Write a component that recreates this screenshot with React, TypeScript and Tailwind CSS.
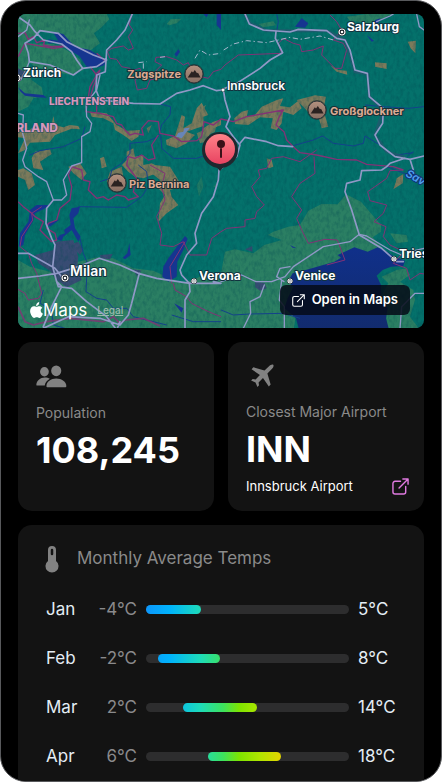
import React from "react";

type Month = { name: string; low: number; high: number };

const months: Month[] = [
  { name: "Jan", low: -4, high: 5 },
  { name: "Feb", low: -2, high: 8 },
  { name: "Mar", low: 2, high: 14 },
  { name: "Apr", low: 6, high: 18 },
];

const YEAR_MIN = -4;
const YEAR_MAX = 29;

function ExternalIcon({ className }: { className: string }) {
  return (
    <svg viewBox="0 0 18 18" fill="none" stroke="currentColor" strokeLinecap="round" strokeLinejoin="round" className={className} aria-hidden="true">
      <path d="M9 3.5H3.2A2.2 2.2 0 0 0 1 5.700V14.800A2.200 2.200 0 0 0 3.200 17H12.300A2.200 2.200 0 0 0 14.500 14.800V9" />
      <path d="M7.500 10.500L17 1M11.500 1H17V6.500" />
    </svg>
  );
}

function Peak({ x, y }: { x: number; y: number }) {
  return (
    <g transform={`translate(${x} ${y})`}>
      <circle r="10" fill="#12282d" opacity=".55" />
      <circle r="9" fill="url(#peak)" stroke="#31373a" strokeWidth="1" />
      <path d="M-6.300 3.500L-2.200 -2.800L-1 -1.500L.8 -4L3 -.8L4 -1.300L6.500 3.500Z" fill="#2a2221" />
    </g>
  );
}

function City({ x, y, r = 3 }: { x: number; y: number; r?: number }) {
  return (
    <g transform={`translate(${x} ${y})`}>
      <circle r={r + 1} fill="#101820" />
      <circle r={r} fill="#101820" stroke="#fff" strokeWidth="1.200" />
      <circle r={r > 2 ? 1.3 : 1} fill="#fff" />
    </g>
  );
}

function Terrain() {
  return (
    <g transform="scale(.33333)">
      <rect x="0" y="0" width="1326" height="1000" fill="#04716b" />

      {/* lowlands */}
      <g fill="#2b7f63">
        <path d="M54 42H320L328 58L305 82L282 100L300 130L262 158L240 150L200 125L165 95L120 95L80 130L54 140Z" />
        <path d="M54 120L80 130L160 132L200 150L240 178L250 210L215 225L160 215L105 200L85 185L95 240L125 262L130 290L100 295L85 320L54 335Z" />
        <path d="M500 72L512 58L545 56L530 70L508 76ZM775 72L820 64L828 76L790 82ZM1040 50L1100 42H1180L1150 55L1110 70L1050 62Z" />
        <path d="M54 780L90 800L150 815L235 785L290 772L340 775L400 805L460 812L510 835L550 850L600 830L663 820L675 755L705 748L760 760L793 735L845 720L803 705L820 695L865 680L900 675L925 632L965 612L1013 613L1038 583L1083 605L1143 675L1143 695L1118 712L1143 738L1130 758L1100 830L900 850L880 1000H54Z" />
        <path d="M1170 700L1220 705L1224 725L1190 730ZM1145 830L1190 810L1220 805L1230 825L1200 845L1240 870L1245 900L1230 950L1260 990H1160L1158 930L1143 890L1165 850Z" />
        <path d="M590 555L605 530L610 560L597 590ZM640 560L650 550V562Z" opacity=".7" />
      </g>

      {/* urban areas */}
      <g fill="#384c73">
        <path d="M105 765L160 750L165 725L220 720L235 770L232 800L245 840L200 862L170 840L150 812L115 790Z" />
        <path d="M175 730L205 735L235 725L250 750L240 765L215 740L180 742ZM300 765L338 762L330 778L302 775ZM765 845L793 848L800 865L780 872L766 862ZM735 748L757 738V755ZM400 808L425 812L410 828Z" />
        <path d="M54 205L75 215L66 240H54Z" />
      </g>

      {/* bare rock */}
      <g fill="#7c7a5b">
        <path d="M54 395L80 395L95 385L120 388L155 372L160 348L165 375L190 382L210 375L235 378L240 388L215 386L165 405L150 425L90 428L75 450L54 460L75 415L54 412Z" />
        <path d="M105 455L150 448L155 462L120 485L130 510L100 505L95 475ZM270 335L320 340L350 375L380 392L420 390L415 410L395 423L370 405L345 390L340 370L310 355L275 350ZM590 325L605 308L625 345L610 350L612 378L590 385L560 395L585 405L560 430L530 445L500 435L498 420L525 408L545 345L555 350L550 385L575 370Z" />
        <path d="M380 455L400 445L405 470L430 465L430 495L455 490L475 500L470 520L430 535L405 530L385 515L366 495L380 480ZM300 475L312 470L320 500L305 505ZM610 385L640 365L663 358L663 375L640 385L625 410L607 405Z" />
        <path d="M703 355L725 335L745 330L740 350L765 345L785 320L830 300L850 295L840 318L870 322L895 302L905 325L880 345L850 335L845 370L830 390L812 385L818 355L780 352L745 375L705 372ZM890 300L945 286L978 290L970 330L985 380L965 385L955 350L930 342ZM990 195L1015 210L1040 212L1042 224L1010 215ZM1125 187L1160 190L1160 207L1125 200ZM1223 125L1248 122L1246 160L1232 145Z" />
        <path d="M205 500L240 490L260 520L245 540L220 520ZM70 505L95 520L105 555L85 570L75 540L54 530V510ZM330 515L365 500L370 530L345 560L320 545ZM465 495L510 500L535 540L540 560L510 570L515 590L535 615L500 640L475 665L480 610L495 585L470 560L480 540L455 520ZM1190 535L1210 522L1208 550L1180 568L1188 545ZM800 475L815 480L820 500L805 505ZM805 495H820L812 505Z" />
        <path d="M590 400L650 370L645 395L625 405L620 425L600 430ZM440 385L455 375L445 400ZM600 325L618 315L600 350Z" opacity=".8" />
      </g>

      <rect x="0" y="0" width="1326" height="1000" filter="url(#relief)" opacity=".45" />

      {/* lakes and sea */}
      <g fill="#163590">
        <path d="M158 95L190 102L225 140L270 150L318 180L312 196L295 202L260 200L238 168L200 145L182 128L145 130V118L175 122Z" />
        <path d="M610 42H625L620 52ZM650 42H663V90L650 75ZM885 80L905 55L925 70L915 83ZM535 148L540 155L530 170L523 163ZM1100 105L1122 122L1115 125ZM1125 60L1142 55L1132 75L1128 95L1120 90Z" />
        <path d="M54 262L75 280L130 285L140 293L110 292L75 287L62 275Z" />
        <path d="M90 630L110 615L150 615L130 628L105 640L98 665L75 705L70 735L56 740L60 700L85 665ZM140 670L180 658L150 680ZM215 625L240 620L235 640L220 655L225 685L242 710L235 725L215 690L190 710L185 722L170 718L180 705L195 700L192 690L212 675L208 645Z" />
        <path d="M555 708L563 716L550 750L532 785L530 830L505 845L487 830L490 800L505 775ZM388 730L392 765L375 778L368 773L382 760ZM522 910L550 925L545 938ZM870 735L890 745L878 743Z" />
      </g>
      <path d="M863 845L878 820L928 807L1003 785L1023 773L1013 765L1063 742L1103 755L1133 742L1163 757L1183 770L1215 782L1210 798L1173 800L1148 810L1130 827L1143 855L1143 895L1163 925L1158 955L1170 1000H900L888 955L853 925L863 895L880 860Z" fill="url(#sea)" />
      <path d="M528 410L535 398L550 395L553 385L570 383L560 395L545 415L535 412Z" fill="#6785b8" />

      {/* rivers */}
      <g fill="none" stroke="#14418b" strokeWidth="3" strokeLinejoin="round">
        <path d="M88 466L120 452L190 440L245 415L255 380" />
        <path d="M480 312L512 320L510 345L485 375L475 410L440 425L390 430V460L365 490L335 510L330 535L300 545M482 405L485 445L520 475L590 475L620 465L660 455L690 480" />
        <path d="M235 620L380 622L425 590L445 560L440 515L415 495M240 715L250 760L262 790L258 875L290 895L320 900L340 925H380L400 950L440 960L500 975" />
        <path d="M880 437L940 420L968 408L1000 430L1060 438L1090 430L1095 408L1140 435M1095 315L1150 320L1225 325L1272 320M830 42L835 65L830 95M663 930L700 945L750 942L850 940L900 955M515 945L580 965H663M130 870L120 910L155 930L160 975L195 985" />
        <path d="M1160 500L1240 530L1272 550M1190 465L1240 458M1220 470L1240 455" />
      </g>

      {/* borders */}
      <g fill="none" stroke="#833276" strokeWidth="3" strokeLinejoin="round">
        <path d="M395 42L388 75L398 90L385 110L400 145L385 150L370 138L335 145L322 155L330 175L350 178L365 200L390 205L392 213L420 205L425 225L405 240L412 270L440 265L450 240L470 235L465 215L485 195L465 185L468 172L500 170L530 180L550 195L565 188L580 225L625 235L640 215L663 208L675 195L715 165L845 160L835 130L850 115L880 130L900 135L905 155L940 150L970 138L965 165L1005 205L1025 205L1040 150L1030 130L1000 120L1025 90L1010 65L990 45" />
        <path d="M54 100L75 98L85 118L100 110L110 128L135 120L130 135L155 140L190 138M75 130L160 145L195 140M54 170L75 130M290 160L318 185M270 200L290 225L270 260L262 310L258 335L300 340L340 350L350 370L365 375L375 390L390 405L405 400L430 405L425 385L445 362L475 365L480 400L520 408L545 425L590 422L605 410L612 365L640 375L663 357L700 365L740 350L850 330L838 350L828 375L852 395L860 420L880 440L900 458L950 465L1010 478L1070 480L1100 493L1180 500L1210 510M285 225L300 210L280 260L270 295L290 300V335" strokeWidth="4" />
        <path d="M475 405L455 435L465 475L445 480L425 465L405 475L385 470L380 495L410 535L405 555L400 575L415 590L385 600L375 590L350 585L325 600L310 590L290 595L265 570L270 545L250 540L245 510L215 500L205 525L215 560L210 600L180 625L170 660L145 670L140 685L165 700L170 720L155 725L140 710L120 690L130 665L105 650L95 640L70 620L54 605" strokeWidth="4" />
        <path d="M125 620L95 640L98 660L65 710L60 740L85 760L95 790L110 820L125 880L115 895L85 900L75 880L54 868" />
        <path d="M450 495L495 520L485 560L495 600L470 650L485 700L480 735L520 740L550 725L560 745L570 765L620 765L635 715L663 695L680 685L735 680L735 660L765 655L770 635L793 615L770 590L755 560L780 530L775 510L800 505L815 475L850 470L900 485L950 450" />
        <path d="M942 470L945 520L900 550L875 590L905 630L890 655L905 690L925 730L975 718L1012 720L1035 780L980 795M1210 510L1170 512L1160 535L1125 560L1103 575L1110 602L1160 615L1150 640L1122 665L1158 680L1150 710L1170 735L1212 755L1180 790L1220 805L1230 840L1260 820L1272 822M520 850L525 870L560 890L575 910L625 935L663 950M555 725L510 800L515 850" />
        <path d="M54 920L75 965L100 975L140 965L210 955L310 965L340 950L360 970L375 960L430 955L480 978" strokeWidth="5" opacity=".8" />
      </g>

      {/* motorways */}
      <g fill="none" stroke="#27556f" strokeWidth="9" opacity=".7">
        <path d="M735 42L750 70L800 92L980 92L1035 120L1065 215L1103 222L1108 290L1150 330L1125 405L1160 455L1215 472" />
      </g>
      <g fill="none" stroke="#9098c6" strokeWidth="5" strokeLinejoin="round" strokeLinecap="round">
        <path d="M397 42L375 90L350 120L320 150L316 215L290 225L288 270L300 300L400 310L480 312L530 280L570 270L610 257L650 272L663 270L710 250L780 205L810 180L848 158L826 115L828 95M54 50L90 75L105 95L130 120L185 132L215 155L230 180L248 205L290 200L320 180L280 165L230 140L200 125L175 100L120 92L100 115L75 130L85 160L88 185L150 195L220 225L248 205" />
        <path d="M54 110L80 90L88 60M88 185L75 215L62 240L54 245M54 340L70 345L68 400L80 445L68 480L75 500L115 530L140 545L160 600L185 600L200 585L190 540L215 498L245 488V410L270 395L275 370L260 350L258 310L290 270L300 225" strokeWidth="4" />
        <path d="M160 600L140 625L138 670L155 715L165 735L158 800L170 845L185 860L155 920L130 980M54 760H85L165 805L185 830M54 835L120 828L170 820L235 800L298 775L360 795L415 820L470 835L570 850L663 850L640 845M170 845L175 860L215 865L260 905L320 950L350 990M130 985L205 950L300 955L360 975L385 945L395 910L418 820M350 990L360 965" />
        <path d="M671 275L675 300L690 350L678 380L700 410L720 435L710 470L690 485L657 510L655 540L640 590L605 640L585 700L590 730L560 765L540 810L545 825L568 850L570 875L555 900V985" />
        <path d="M735 42L748 72L790 90L870 96L895 88L980 92L1010 115L1035 120L1050 150L1065 210L1102 220L1108 290L1150 325L1148 370L1125 405L1140 435L1185 470L1230 478L1272 468M720 430L735 412L800 425L835 437L878 440M1230 478L1240 510M1160 500L1145 510L1085 512L1080 540L1040 550L1035 575L1055 630L1078 705L1145 745L1190 785L1210 785M1160 500L1170 490L1215 475" />
        <path d="M663 845L725 825L768 845L815 845L855 830L880 800L970 740L1050 725L1078 703L1100 708L1170 750L1205 765M793 855L780 890L750 905L752 940L730 985M852 845L830 830L840 805L870 800M845 840L838 900L853 920V985M1272 745L1230 755M1272 880L1245 880L1205 920L1200 985M1130 65L1170 48L1180 42M1250 42L1258 80L1272 90" strokeWidth="4" />
      </g>
      <path d="M585 175L600 150L625 165L663 160M671 150L700 132L740 122L770 125L800 128L870 112L900 118L960 108L1000 120M415 188L440 185M430 190V210L415 225M480 172L495 170" fill="none" stroke="#a7b7ce" strokeWidth="3" strokeDasharray="16 8 4 8" />
    </g>
  );
}

function RegionMap() {
  return (
    <svg viewBox="18 14 406 314" preserveAspectRatio="xMidYMid slice" className="block h-full w-full font-['Inter',sans-serif]" role="img" aria-label="Map of the Alps">
      <defs>
        <linearGradient id="peak" x1="0" y1="0" x2="0" y2="1">
          <stop offset="0" stopColor="#b3917f" />
          <stop offset="1" stopColor="#876d62" />
        </linearGradient>
        <linearGradient id="marker" x1="0" y1="0" x2="0" y2="1">
          <stop offset="0" stopColor="#ff8389" />
          <stop offset="1" stopColor="#e84361" />
        </linearGradient>
        <linearGradient id="sea" x1="0" y1="0" x2="0" y2="1">
          <stop offset="0" stopColor="#10308a" />
          <stop offset="1" stopColor="#122b6c" />
        </linearGradient>
        <filter id="relief" x="0" y="0" width="100%" height="100%" colorInterpolationFilters="sRGB">
          <feTurbulence type="fractalNoise" baseFrequency=".1 .06" numOctaves="3" seed="4" />
          <feColorMatrix values="0 0 0 0 0  0 0 0 0 .28  0 0 0 0 .32  1.600 0 0 0 -.65" />
        </filter>
      </defs>

      <Terrain />

      <Peak x={194} y={74} />
      <Peak x={317} y={110} />
      <Peak x={117} y={183} />

      <City x={17} y={78} />
      <City x={342} y={32} />
      <City x={223} y={90} r={1} />
      <City x={65} y={278} r={3} />
      <City x={194} y={281} r={2} />
      <City x={290} y={281} r={2} />
      <City x={394} y={259} r={2} />

      <g>
        <path d="M213 163L220 171L227 163Z" fill="#20272e" />
        <circle cx="220" cy="150" r="18" fill="#20272e" />
        <circle cx="220" cy="149" r="15" fill="url(#marker)" />
        <circle cx="221" cy="144" r="4" fill="#3a1118" />
        <path d="M221 149V157" stroke="#3a1118" strokeWidth="2" strokeLinecap="round" />
      </g>

      <g fill="#fff" stroke="#12333f" strokeWidth="2" strokeLinejoin="round" paintOrder="stroke" className="text-[12px] font-semibold">
        <text x="23" y="77" className="font-bold">Zürich</text>
        <text x="347" y="31" className="font-bold">Salzburg</text>
        <text x="199" y="280" className="font-bold">Verona</text>
        <text x="295" y="280" className="font-bold">Venice</text>
        <text x="399" y="258" className="font-bold">Tries</text>
        <text x="227" y="90">Innsbruck</text>
        <text x="70" y="276" className="text-[14px]">Milan</text>
      </g>
      <g fill="#dcab93" stroke="#1b3036" strokeWidth="2" strokeLinejoin="round" paintOrder="stroke" className="text-[11px] font-bold">
        <text x="181" y="78" textAnchor="end">Zugspitze</text>
        <text x="330" y="115">Großglockner</text>
        <text x="129" y="188">Piz Bernina</text>
      </g>
      <g fill="#d597bc" stroke="#174f5c" strokeWidth="1" paintOrder="stroke" className="font-extrabold">
        <text x="49" y="105" className="text-[10px]">LIECHTENSTEIN</text>
        <text x="58" y="132" textAnchor="end" className="text-[12px]">RLAND</text>
      </g>
      <text transform="translate(405 176) rotate(28)" fill="#4fa0ef" stroke="#123276" strokeWidth="2" paintOrder="stroke" className="text-[11px] font-semibold italic">Sav</text>
    </svg>
  );
}

function TempRow({ name, low, high }: Month) {
  const span = YEAR_MAX - YEAR_MIN;
  const start = (low - YEAR_MIN) / span;
  const length = (high - low) / span;
  return (
    <li className="flex h-[49px] items-center text-[17px] text-[#e4edf5]">
      <span className="w-10 shrink-0">{name}</span>
      <span className="w-[51px] shrink-0 text-right text-[#8a8a8c]">{low}°C</span>
      <div className="ml-[9px] flex h-[9px] flex-1 rounded-full bg-[#2d2d2e]">
        <div className="h-full overflow-hidden rounded-full" style={{ marginLeft: `${start * 100}%`, width: `${length * 100}%` }}>
          <div
            className="h-full bg-[linear-gradient(90deg,#0c96fb_0%,#00b4fb_12%,#1edcb8_27%,#3de25e_38%,#7ee400_46%,#b0e600_56%,#e6d400_67%,#ff9500_85%,#ff3b30_100%)]"
            style={{ width: `${100 / length}%`, marginLeft: `${(-start / length) * 100}%` }}
          />
        </div>
      </div>
      <span className="ml-[9px] w-12 shrink-0">{high}°C</span>
    </li>
  );
}

export default function App() {
  return (
    <div className="h-screen bg-white">
      <main className="h-full overflow-hidden rounded-[26px] border border-[#58595c] bg-black px-[17px] pt-[13px] font-['Inter',sans-serif] text-white">
        <section className="relative h-[314px] overflow-hidden rounded-lg">
          <RegionMap />
          <div className="absolute bottom-[6px] left-3 flex items-center">
            <svg viewBox="0 0 24 30" className="h-4 w-[13px]" fill="#fff" aria-hidden="true">
              <path d="M17 0c.3 2.800-.8 4.800-2.200 6.200C13.500 7.400 12 7.800 11.200 7.600 11 4 13.500 1 17 0ZM12.200 9c1.300 0 2.700-1.200 5-1.200 2.400 0 4.500 1.200 5.700 3-4.500 2.800-3.800 8.800 1.100 11-1.600 4.200-4 8-6.600 8-1.900 0-2.600-1.200-4.800-1.200-2.300 0-3.200 1.200-4.900 1.200C4.200 29.800 0 22.800 0 17 0 11.200 3.600 7.900 7.200 7.900c2.200 0 3.800 1.100 5 1.100Z" />
            </svg>
            <span className="text-[17px] leading-6">Maps</span>
            <a href="#legal" className="ml-[10px] text-[10px] font-medium text-[#9ab9ac] underline">Legal</a>
          </div>
          <a href="#maps" className="absolute right-[14px] bottom-[13px] flex h-[30px] items-center gap-[7px] rounded-[6px] bg-[#050a18]/85 px-3 text-[13px] font-semibold">
            <ExternalIcon className="h-[13px] w-[13px] stroke-[1.5px]" />
            Open in Maps
          </a>
        </section>

        <div className="mt-[14px] grid grid-cols-2 gap-[14px]">
          <section className="h-[169px] rounded-[14px] bg-[#131313] px-[18px] pt-[23px]">
            <svg viewBox="110 91 92 68" className="h-[23px] w-[31px]" fill="#828282" aria-hidden="true">
              <ellipse cx="135" cy="111" rx="13" ry="14" />
              <ellipse cx="170" cy="108" rx="15" ry="16" />
              <path d="M111 150c0-12 12-22 25-22 6 0 11 1 15 4-9 5-14 12-15 20h-22c-2 0-3-1-3-2Z" />
              <path d="M141 153c0-12 13-22 29-22s30 10 30 22c0 3-1 4-4 4h-51c-3 0-4-1-4-4Z" />
            </svg>
            <h2 className="mt-[15px] text-[14px] leading-5 text-[#8a8a8a]">Population</h2>
            <p className="mt-[7px] text-[36px] leading-[40px] font-bold">108,245</p>
          </section>

          <section className="h-[169px] rounded-[14px] bg-[#131313] px-[18px] pt-[22px]">
            <svg viewBox="0 0 24 24" className="ml-[5px] h-[23px] w-[23px]" fill="#828282" aria-hidden="true">
              <path d="M23.200.8c.9 1-.1 3-1.500 4.400l-4.600 4.700 3.400 11.600-1.900 1.900-6.100-8.700-4.600 4.500.5 3-1.700 1.700-2-4.600-4.600-2 1.700-1.700 3 .5 4.500-4.600L.6 5.400l1.900-1.900 11.600 3.400 4.700-4.600C20.200.900 22.200-.1 23.200.8Z" />
            </svg>
            <h2 className="mt-[15px] text-[14px] leading-5 text-[#8a8a8a]">Closest Major Airport</h2>
            <p className="mt-[7px] text-[36px] leading-[40px] font-bold">INN</p>
            <div className="mt-[7px] flex items-center justify-between text-[13px] leading-5">
              <span>Innsbruck Airport</span>
              <a href="#airport" aria-label="Open Innsbruck Airport" className="-mr-[3px] text-[#e07ae0]">
                <ExternalIcon className="h-[17px] w-[17px] stroke-[1.5px]" />
              </a>
            </div>
          </section>
        </div>

        <section className="mt-[14px] rounded-[14px] bg-[#131313] pt-[19px] pr-[18px] pb-14 pl-7">
          <header className="flex h-[30px] items-center gap-[18px]">
            <svg viewBox="0 0 14 27" className="-ml-px h-[27px] w-[14px]" aria-hidden="true">
              <path d="M3 4a4 4 0 0 1 8 0v11a6.500 6.500 0 1 1-8 0Z" fill="#828282" />
              <path d="M7 4v4" stroke="#131313" strokeWidth="2.500" strokeLinecap="round" />
            </svg>
            <h2 className="text-[17px] text-[#8a8a8a]">Monthly Average Temps</h2>
          </header>
          <ul className="mt-[11px]">
            {months.map((month) => (
              <TempRow key={month.name} {...month} />
            ))}
          </ul>
        </section>
      </main>
    </div>
  );
}
